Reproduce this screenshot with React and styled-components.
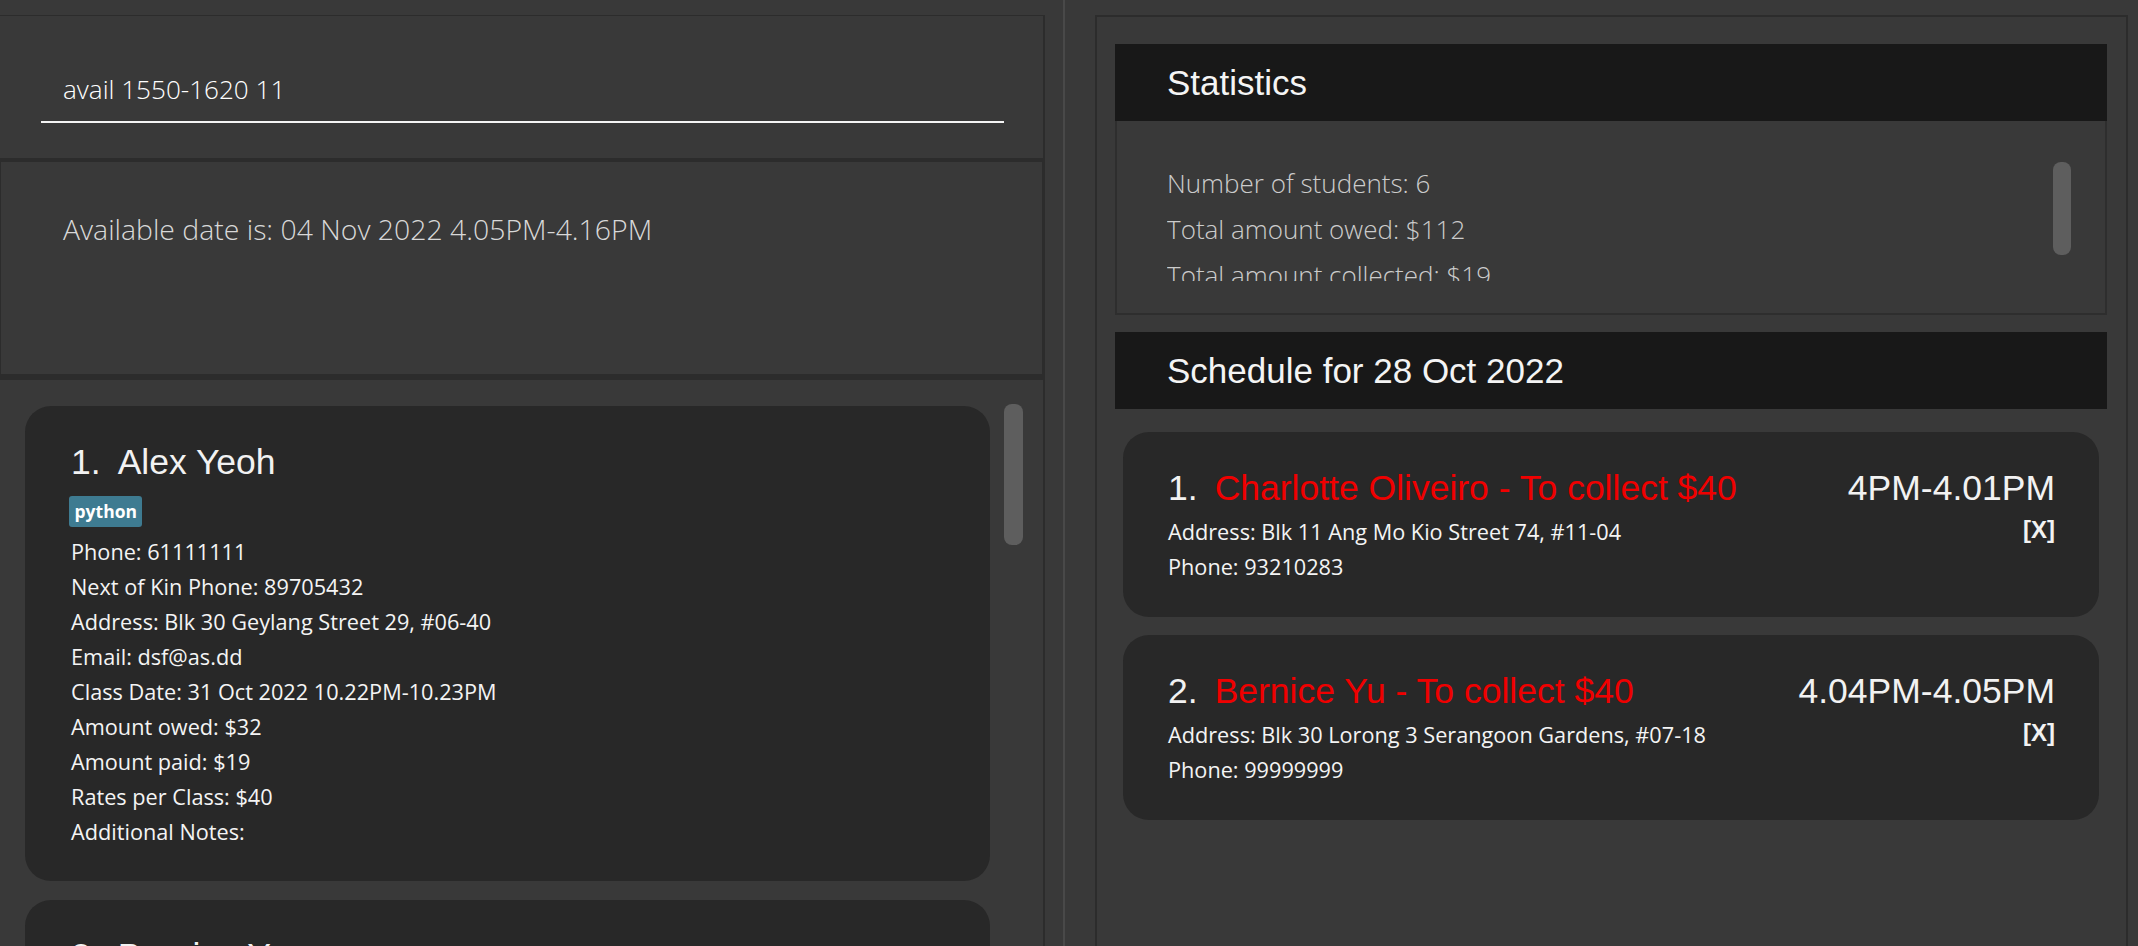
import React from "react";
import styled, { createGlobalStyle } from "styled-components";

const GlobalStyle = createGlobalStyle`
  html, body {
    margin: 0;
    padding: 0;
    background: #393939;
  }
  body {
    width: 2138px;
    height: 946px;
    overflow: hidden;
  }
  #root {
    height: 946px;
  }
  * {
    box-sizing: border-box;
  }
`;

const SEGOE = `"Open Sans", "Noto Sans", sans-serif`;
const ARIAL = `"Liberation Sans", Arial, sans-serif`;

const Root = styled.div`
  display: flex;
  width: 2138px;
  height: 946px;
  padding-right: 10px;
  background: #393939;
  overflow: hidden;
`;

const LeftColumn = styled.div`
  width: 1045px;
  flex-shrink: 0;
  margin-top: 15px;
  border-right: 2px solid #2c2c2c;
  display: flex;
  flex-direction: column;
  min-height: 0;
`;

const CommandPanel = styled.div`
  height: 143px;
  flex-shrink: 0;
  border-top: 1px solid #2c2c2c;
  padding: 55px 39px 0 41px;
`;

const CommandField = styled.div`
  height: 52px;
  border-bottom: 2px solid #f4f4f4;
  padding-left: 22px;
  font-family: ${SEGOE};
  font-weight: 300;
  font-size: 26.1px;
  line-height: 36px;
  color: #ffffff;
  white-space: nowrap;
`;

const ResultPanel = styled.div`
  height: 222px;
  flex-shrink: 0;
  border: 1px solid #2c2c2c;
  border-top-width: 4px;
  border-bottom-width: 6px;
  padding: 48px 40px 0 62px;
  font-family: ${SEGOE};
  font-weight: 300;
  font-size: 28.4px;
  line-height: 38px;
  color: #d8d8d8;
  white-space: nowrap;
`;

const ListPanel = styled.div`
  flex: 1;
  min-height: 0;
  overflow: hidden;
  display: flex;
  gap: 14px;
  padding: 26px 20px 0 25px;
`;

const CardList = styled.div`
  width: ${(p) => p.$width}px;
  flex-shrink: 0;
  display: flex;
  flex-direction: column;
  gap: ${(p) => p.$gap}px;
`;

const ScrollThumb = styled.div`
  width: ${(p) => p.$width}px;
  height: ${(p) => p.$height}px;
  margin-top: ${(p) => p.$offset}px;
  flex-shrink: 0;
  border-radius: 8px;
  background: #5e5e5e;
`;

const PersonCard = styled.div`
  flex-shrink: 0;
  background: #282828;
  border-radius: 26px;
  padding: 36px 40px 32px 46px;
`;

const CardTitle = styled.div`
  display: flex;
  font-family: ${ARIAL};
  font-size: 35.5px;
  line-height: 40px;
  color: #f2f2f2;
  white-space: nowrap;
`;

const Name = styled.span`
  margin-left: 17px;
  color: ${(p) => (p.$alert ? "#f00000" : "#f2f2f2")};
`;

const Tags = styled.div`
  display: flex;
  gap: 8px;
  margin-top: 14px;
  margin-left: -2px;
`;

const Tag = styled.span`
  height: 31px;
  padding: 0 5.5px;
  border-radius: 3px;
  background: #3e7b91;
  font-family: ${SEGOE};
  font-weight: 700;
  font-size: 17.5px;
  line-height: 31px;
  color: #ffffff;
`;

const Details = styled.div`
  margin-top: ${(p) => p.$gap}px;
  display: flex;
  flex-direction: column;
`;

const Detail = styled.div`
  font-family: ${SEGOE};
  font-size: 21.7px;
  line-height: 35px;
  color: #f4f4f4;
  white-space: nowrap;
`;

const Divider = styled.div`
  width: 50px;
  flex-shrink: 0;
  display: flex;
  padding-left: 18px;
`;

const DividerLine = styled.div`
  width: 2px;
  background: #494949;
`;

const RightPanel = styled.div`
  width: 1033px;
  flex-shrink: 0;
  margin-top: 15px;
  border: 2px solid #2c2c2c;
  border-bottom: none;
  padding: 27px 19px 0 18px;
  display: flex;
  flex-direction: column;
  overflow: hidden;
`;

const SectionHeader = styled.div`
  height: 77px;
  flex-shrink: 0;
  margin-top: ${(p) => p.$gap || 0}px;
  display: flex;
  align-items: center;
  padding-left: 52px;
  background: #181818;
  font-family: ${ARIAL};
  font-size: 35px;
  color: #f4f4f4;
  white-space: nowrap;
`;

const StatsBody = styled.div`
  height: 194px;
  flex-shrink: 0;
  border: 2px solid #2e2e2e;
  border-top: none;
  padding: 29px 34px 0 50px;
  display: flex;
`;

const StatsViewport = styled.div`
  flex: 1;
  height: 131px;
  overflow: hidden;
  padding-top: 10px;
  font-family: ${SEGOE};
  font-weight: 300;
  font-size: 26px;
  line-height: 46px;
  color: #cccccc;
  white-space: nowrap;
`;

const ScheduleList = styled.div`
  margin-top: 23px;
  padding: 0 8px;
  display: flex;
  flex-direction: column;
  gap: 18px;
`;

const ScheduleCard = styled.div`
  display: flex;
  justify-content: space-between;
  background: #282828;
  border-radius: 26px;
  padding: 36px 44px 33px 45px;
`;

const Column = styled.div`
  display: flex;
  flex-direction: column;
  align-items: ${(p) => (p.$end ? "flex-end" : "flex-start")};
`;

const Remove = styled.div`
  margin-top: 8px;
  font-family: ${ARIAL};
  font-weight: 700;
  font-size: 24px;
  line-height: 28px;
  color: #f2f2f2;
`;

const people = [
  {
    name: "Alex Yeoh",
    tags: ["python"],
    details: [
      "Phone: 61111111",
      "Next of Kin Phone: 89705432",
      "Address: Blk 30 Geylang Street 29, #06-40",
      "Email: dsf@as.dd",
      "Class Date: 31 Oct 2022 10.22PM-10.23PM",
      "Amount owed: $32",
      "Amount paid: $19",
      "Rates per Class: $40",
      "Additional Notes:",
    ],
  },
  {
    name: "Bernice Yu",
    tags: [],
    details: [
      "Phone: 99999999",
      "Next of Kin Phone: 99272758",
      "Address: Blk 30 Lorong 3 Serangoon Gardens, #07-18",
    ],
  },
];

const schedule = [
  {
    name: "Charlotte Oliveiro - To collect $40",
    time: "4PM-4.01PM",
    address: "Address: Blk 11 Ang Mo Kio Street 74, #11-04",
    phone: "Phone: 93210283",
  },
  {
    name: "Bernice Yu - To collect $40",
    time: "4.04PM-4.05PM",
    address: "Address: Blk 30 Lorong 3 Serangoon Gardens, #07-18",
    phone: "Phone: 99999999",
  },
];

const stats = [
  "Number of students: 6",
  "Total amount owed: $112",
  "Total amount collected: $19",
];

export default function App() {
  return (
    <>
      <GlobalStyle />
      <Root>
        <LeftColumn>
          <CommandPanel>
            <CommandField>avail 1550-1620 11</CommandField>
          </CommandPanel>
          <ResultPanel>Available date is: 04 Nov 2022 4.05PM-4.16PM</ResultPanel>
          <ListPanel>
            <CardList $width={965} $gap={19}>
              {people.map((p, i) => (
                <PersonCard key={p.name}>
                  <CardTitle>
                    <span>{i + 1}.</span>
                    <Name>{p.name}</Name>
                  </CardTitle>
                  {p.tags.length > 0 && (
                    <Tags>
                      {p.tags.map((t) => (
                        <Tag key={t}>{t}</Tag>
                      ))}
                    </Tags>
                  )}
                  <Details $gap={7}>
                    {p.details.map((d) => (
                      <Detail key={d}>{d}</Detail>
                    ))}
                  </Details>
                </PersonCard>
              ))}
            </CardList>
            <ScrollThumb $width={19} $height={141} $offset={-2} />
          </ListPanel>
        </LeftColumn>

        <Divider>
          <DividerLine />
        </Divider>

        <RightPanel>
          <SectionHeader>Statistics</SectionHeader>
          <StatsBody>
            <StatsViewport>
              {stats.map((s) => (
                <div key={s}>{s}</div>
              ))}
            </StatsViewport>
            <ScrollThumb $width={18} $height={93} $offset={12} />
          </StatsBody>
          <SectionHeader $gap={17}>Schedule for 28 Oct 2022</SectionHeader>
          <ScheduleList>
            {schedule.map((s, i) => (
              <ScheduleCard key={s.name}>
                <Column>
                  <CardTitle>
                    <span>{i + 1}.</span>
                    <Name $alert>{s.name}</Name>
                  </CardTitle>
                  <Details $gap={6}>
                    <Detail>{s.address}</Detail>
                    <Detail>{s.phone}</Detail>
                  </Details>
                </Column>
                <Column $end>
                  <CardTitle>{s.time}</CardTitle>
                  <Remove>[X]</Remove>
                </Column>
              </ScheduleCard>
            ))}
          </ScheduleList>
        </RightPanel>
      </Root>
    </>
  );
}
